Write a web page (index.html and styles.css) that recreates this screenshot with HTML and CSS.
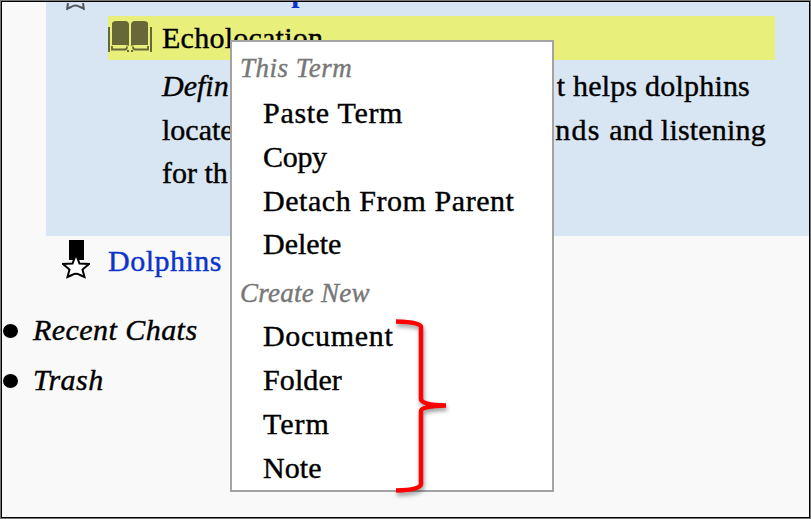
FILE: index.html
```html
<!DOCTYPE html>
<html lang="en">
<head>
<meta charset="utf-8">
<title>Project outline</title>
<link rel="stylesheet" href="styles.css">
</head>
<body>
<main class="frame">
  <section class="selected">
    <div class="parent">
      <svg class="parent-star" width="28" height="9" viewBox="0 0 28 9"><path d="M6 0L5 7M21 0L22 7M5.500 5.500L9 4Q13.500 1 18 4L22 5.500" fill="none" stroke="#53585f" stroke-width="2"/></svg>
      <span class="parent-name">About Us: Dolphins</span>
    </div>
    <div class="term">
      <svg class="book" width="44" height="32" viewBox="0 0 44 32" fill="#666838"><path d="M0 6h2v25H0zM42 6h2v25h-2zM4 2Q5 0 8 0h9q4 0 4 4v21q-2-1-4-1H4zM23 4q0-4 4-4h9q3 0 4 2v22H27q-2 0-4 1z"/><path d="M4 25v3.500h13q2 0 2-3M40 25v3.500H27q-2 0-2-3M19 30h2M23 30h2" fill="none" stroke="#666838" stroke-width="1.800"/></svg>
      <span class="echo">Echolocation</span>
    </div>
    <div class="definition">
      <p><i class="defin">Defin</i><span class="helps">t helps dolphins</span></p>
      <p><span class="locate">locate</span><span class="listening"><span class="sounds">nds</span> and listening</span></p>
      <p><span class="forth">for th</span></p>
    </div>
  </section>
  <div class="project">
    <svg class="ribbon" width="28" height="40" viewBox="0 0 28 40"><path d="M7 1h15v20H7z"/><path d="M14 15.500L17.500 24.500L27 25L20.500 30.500L22.500 38L18 36Q14 33.500 10 36L5.500 38L7.500 30.500L1 25L10.500 24.500z" fill="#fff" stroke="#000" stroke-width="2"/></svg>
    <a class="dolphins">Dolphins</a>
  </div>
  <ul class="sections">
    <li><span class="dot"></span><i class="chats">Recent Chats</i></li>
    <li><span class="dot"></span><i class="trash">Trash</i></li>
  </ul>
  <nav class="menu">
    <h2 class="this-term">This Term</h2>
    <ul>
      <li class="paste">Paste Term</li>
      <li class="copy">Copy</li>
      <li class="detach">Detach From Parent</li>
      <li class="delete">Delete</li>
    </ul>
    <h2 class="create-new">Create New</h2>
    <ul>
      <li class="document">Document</li>
      <li class="folder">Folder</li>
      <li class="new-term">Term</li>
      <li class="note">Note</li>
    </ul>
  </nav>
  <svg class="brace" width="60" height="182" viewBox="0 0 60 182"><path d="M2 5.500Q27 6 27 11V83Q27 89 52 89.500Q27 90 27 95V168Q27 174 2 174.500" fill="none" stroke="#f00" stroke-width="4.500"/></svg>
</main>
</body>
</html>
```

FILE: styles.css
```css
* { box-sizing: border-box; margin: 0; padding: 0; }
body {
  font: 30px/44px "Liberation Serif", serif;
  color: #000;
  -webkit-text-stroke: 0.4px currentColor;
}
svg { flex: none; }
.frame {
  position: relative;
  width: 811px;
  height: 519px;
  overflow: hidden;
  border: 1px solid #777;
  box-shadow: inset 0 0 0 1px #000;
  background: #f9f9f9;
  white-space: nowrap;
}
.selected {
  height: 234px;
  margin: 1px 1px 0 45px;
  padding-top: 1px;
  overflow: hidden;
  background: #d8e5f2;
}
.parent { display: flex; height: 13px; padding-left: 16px; }
.parent-name { margin: -33px 0 0 18px; color: #0c33cc; font-weight: bold; -webkit-text-stroke: 0; }
.term {
  display: flex;
  width: 667px;
  height: 44px;
  margin-left: 62px;
  background: #e8ef7b;
}
.book { margin: 5px 10px 0 0; }
.echo { letter-spacing: 0.25px; }
.definition { width: 607px; margin: 4px 0 0 116px; }
.definition p { display: flex; justify-content: space-between; height: 43.7px; }
.helps { margin-right: 19px; letter-spacing: 0.2px; }
.listening { margin-right: 3px; letter-spacing: 0.2px; }
.sounds { margin-right: 1px; letter-spacing: 1.2px; }
.project { display: flex; height: 47px; padding: 3px 0 0 61px; }
.ribbon { margin-right: 18px; }
.dolphins { color: #0c33cc; letter-spacing: 0.5px; }
.sections { list-style: none; margin-top: 22px; }
.sections li { display: flex; align-items: center; height: 50px; }
.dot { width: 15px; height: 14px; margin: 2px 15px 0 2px; border-radius: 50%; background: #000; }
.chats, .trash { letter-spacing: 0.45px; }
.menu {
  position: absolute;
  left: 229px;
  top: 39px;
  width: 324px;
  height: 452px;
  padding: 4px 0 0 8px;
  border: 2px solid #a3a3a3;
  background: #fff;
}
.menu h2 {
  height: 45px;
  font-size: 27px;
  font-weight: normal;
  font-style: italic;
  letter-spacing: 0.5px;
  color: #777;
}
.menu .create-new { height: 48px; padding-top: 5px; letter-spacing: 0.25px; }
.menu ul { list-style: none; padding-left: 23px; }
.menu li { height: 43.8px; }
.paste, .document { letter-spacing: 0.7px; }
.copy { letter-spacing: -0.3px; }
.detach { letter-spacing: 0.55px; }
.new-term { letter-spacing: 1px; }
.folder, .note { letter-spacing: 0.1px; }
.brace { position: absolute; left: 393px; top: 315px; filter: drop-shadow(1px 3px 2px rgba(0, 0, 0, .4)); }
```
